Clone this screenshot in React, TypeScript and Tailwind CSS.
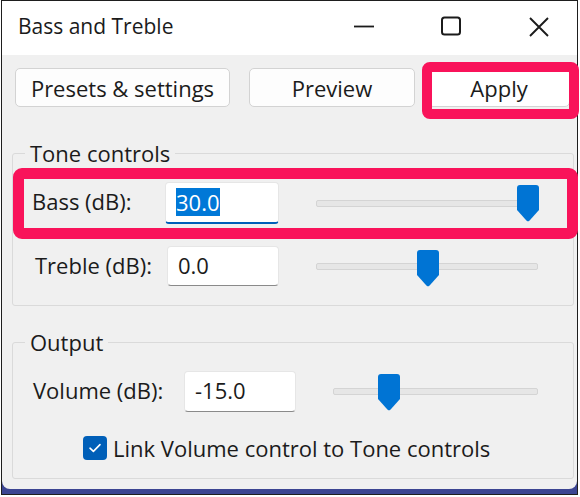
import React from "react";

function Thumb() {
  return (
    <svg width="22" height="37" viewBox="0 0 22 37" className="block">
      <path
        d="M3 0 H19 Q22 0 22 3 V25 L12.6 35.6 Q11 37.2 9.4 35.6 L0 25 V3 Q0 0 3 0 Z"
        fill="#0074d4"
      />
    </svg>
  );
}

function Slider({ width, pos, thumbTop }: { width: number; pos: number; thumbTop: number }) {
  return (
    <div className="relative h-[7px]" style={{ width }}>
      <div className="absolute inset-0 rounded-[2px] border border-[#d4d4d4] bg-[#e6e6e6]" />
      <div className="absolute" style={{ left: pos, top: thumbTop }}>
        <Thumb />
      </div>
    </div>
  );
}

export default function App() {
  return (
    <div className="relative w-[580px] h-[497px] bg-white font-['Open_Sans','Noto_Sans',sans-serif] text-[#1b1b1b] overflow-hidden">
      <div className="ml-[1px] w-[577px] h-[495px] border border-[#1e1e1e] bg-[#3c4592] flex flex-col">
        {/* Title bar */}
        <div className="h-[54px] bg-white flex items-start shrink-0">
          <div className="pl-[16px] pt-[11px] text-[21px] leading-[28px]">Bass and Treble</div>
          <div className="ml-auto flex items-start pr-[28px] pt-[15px]">
            <svg width="20" height="20" viewBox="0 0 20 20">
              <line x1="0" y1="10.5" x2="20" y2="10.5" stroke="#1b1b1b" strokeWidth="1.8" />
            </svg>
            <svg width="20" height="20" viewBox="0 0 20 20" className="ml-[67px]">
              <rect x="1" y="1.5" width="18" height="17" rx="2.5" fill="none" stroke="#1b1b1b" strokeWidth="2" />
            </svg>
            <svg width="20" height="20" viewBox="0 0 20 20" className="ml-[68px] mt-[1px]">
              <path d="M1 1 L19 19 M19 1 L1 19" stroke="#1b1b1b" strokeWidth="1.9" fill="none" />
            </svg>
          </div>
        </div>

        {/* Body */}
        <div className="flex-1 bg-[#f0f0f0] rounded-b-[8px] mb-[5px] flex flex-col text-[22px] leading-[28px]">
          {/* Buttons */}
          <div className="mt-[13px] ml-[13px] flex">
            <div className="w-[215px] h-[39px] bg-[#fdfdfd] border border-[#d3d3d3] rounded-[5px] flex items-center justify-center">
              Presets &amp; settings
            </div>
            <div className="ml-[19px] w-[166px] h-[39px] bg-[#fdfdfd] border border-[#d3d3d3] rounded-[5px] flex items-center justify-center">
              Preview
            </div>
            <div className="ml-[13px] w-[142px] h-[39px] bg-white border border-[#d3d3d3] rounded-[5px] flex items-center justify-center">
              Apply
            </div>
          </div>

          {/* Tone controls */}
          <div className="relative mt-[46px] ml-[10px] w-[562px] h-[153px] border border-[#dadada] rounded-[3px]">
            <div className="absolute left-[12px] -top-[15px] px-[5px] bg-[#f0f0f0]">
              Tone controls
            </div>
            <div className="mt-[28px] pl-[19px] flex items-center">
              <div className="w-[133px] mb-[4px]">Bass (dB):</div>
              <div className="w-[114px] h-[42px] bg-white border border-[#e6e6e6] border-b-2 border-b-[#005fb8] rounded-[4px] flex items-center pl-[10px] pb-[2px]">
                <span className="bg-[#0078d7] text-white">30.0</span>
              </div>
              <div className="ml-[37px]">
                <Slider width={222} pos={201} thumbTop={-15} />
              </div>
            </div>
            <div className="mt-[22px] pl-[22px] flex items-center">
              <div className="w-[132px] mb-[3px]">Treble (dB):</div>
              <div className="w-[112px] h-[40px] bg-white border border-[#e6e6e6] border-b-[#8a8a8a] rounded-[4px] flex items-center pl-[10px] pb-[3px]">
                0.0
              </div>
              <div className="ml-[37px]">
                <Slider width={222} pos={101} thumbTop={-13} />
              </div>
            </div>
          </div>

          {/* Output */}
          <div className="relative mt-[36px] ml-[10px] w-[562px] h-[137px] border border-[#dadada] rounded-[3px]">
            <div className="absolute left-[12px] -top-[15px] px-[5px] bg-[#f0f0f0]">
              Output
            </div>
            <div className="mt-[28px] pl-[20px] flex items-center">
              <div className="w-[151px] mb-[4px]">Volume (dB):</div>
              <div className="w-[112px] h-[41px] bg-white border border-[#e6e6e6] border-b-[#8a8a8a] rounded-[4px] flex items-center pl-[10px] pb-[3px]">
                -15.0
              </div>
              <div className="ml-[37px]">
                <Slider width={205} pos={45} thumbTop={-14} />
              </div>
            </div>
            <div className="mt-[22px] pl-[70px] flex items-center">
              <div className="w-[24px] h-[24px] rounded-[4px] bg-[#005fb8] flex items-center justify-center">
                <svg width="14" height="14" viewBox="0 0 14 14">
                  <path d="M2 7.2 L5.4 10.4 L12 3.6" stroke="white" strokeWidth="1.6" fill="none" strokeLinecap="round" strokeLinejoin="round" />
                </svg>
              </div>
              <div className="ml-[6px]">Link Volume control to Tone controls</div>
            </div>
          </div>
        </div>
      </div>

      {/* Red highlight annotations */}
      <div className="absolute left-[422px] top-[62px] w-[157px] h-[57px] border-[10px] border-[#f9135a] rounded-[8px]" />
      <div className="absolute left-[13px] top-[168px] w-[565px] h-[71px] border-[11px] border-[#f9135a] rounded-[9px]" />
    </div>
  );
}
